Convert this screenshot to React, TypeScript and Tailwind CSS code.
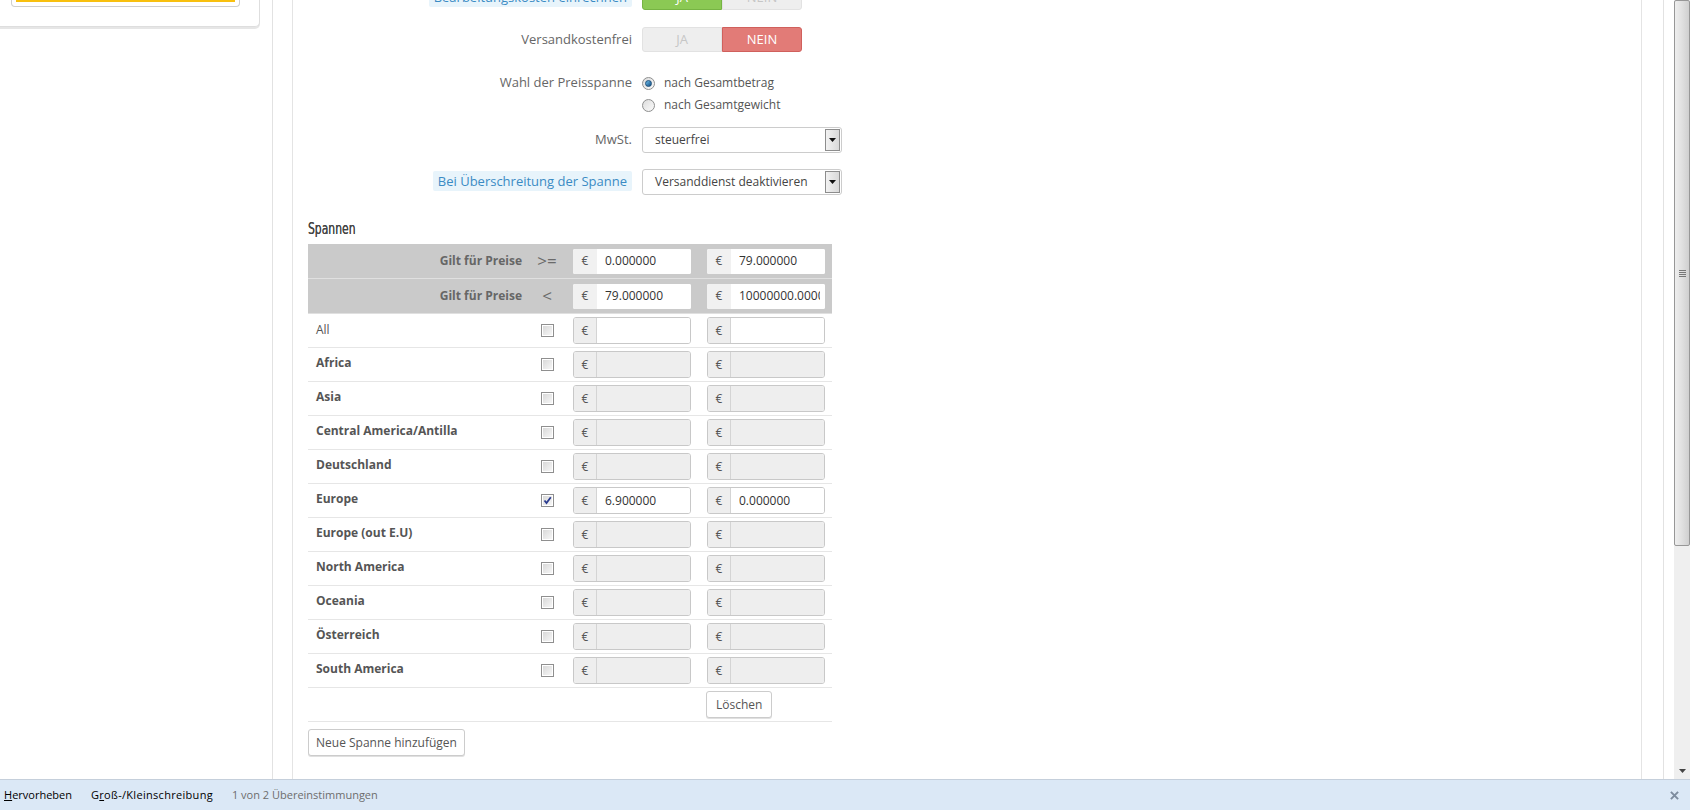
import React from 'react';

const regions = [
  { name: 'Africa' },
  { name: 'Asia' },
  { name: 'Central America/Antilla' },
  { name: 'Deutschland' },
  { name: 'Europe', checked: true, from: '6.900000', to: '0.000000' },
  { name: 'Europe (out E.U)' },
  { name: 'North America' },
  { name: 'Oceania' },
  { name: 'Österreich' },
  { name: 'South America' },
];

function Toggle({ yes }: { yes: boolean }) {
  return (
    <div className="flex h-[25px] w-[160px] text-[13px] uppercase">
      <div
        className={
          yes
            ? 'flex w-[80px] items-center justify-center rounded-l-[3px] border border-[#76b443] bg-[#8bc954] text-white'
            : 'flex w-[80px] items-center justify-center rounded-l-[3px] border border-[#e2e2e2] bg-[#eeeeee] text-[#c6c6c6]'
        }
      >
        JA
      </div>
      <div
        className={
          yes
            ? 'flex w-[80px] items-center justify-center rounded-r-[3px] border border-[#e2e2e2] bg-[#eeeeee] text-[#c6c6c6]'
            : 'flex w-[80px] items-center justify-center rounded-r-[3px] border border-[#d0605c] bg-[#e27b77] text-white'
        }
      >
        NEIN
      </div>
    </div>
  );
}

function Radio({ checked }: { checked?: boolean }) {
  return (
    <span className="flex h-[13px] w-[13px] items-center justify-center rounded-full border border-[#8e8f8f] bg-gradient-to-br from-[#dcdcdc] to-[#fbfbfb]">
      {checked && (
        <span className="h-[7px] w-[7px] rounded-full border border-[#1b4e7a] bg-gradient-to-br from-[#6fc1f0] to-[#124d80]" />
      )}
    </span>
  );
}

function Checkbox({ checked }: { checked?: boolean }) {
  return (
    <span className="flex h-[13px] w-[13px] items-center justify-center border border-[#8f8f8f] bg-white p-[1px]">
      <span className="relative flex h-full w-full items-center justify-center bg-gradient-to-br from-[#d9d9d9] to-[#f6f6f6]">
        {checked && (
          <svg viewBox="0 0 9 9" className="absolute h-[9px] w-[9px]">
            <path d="M1.5 4.5 L3.5 7 L7.8 1.2" fill="none" stroke="#2a3b8f" strokeWidth="1.8" />
          </svg>
        )}
      </span>
    </span>
  );
}

function Select({ value }: { value: string }) {
  return (
    <div className="flex h-[26px] w-[200px] items-center rounded-[3px] border border-[#cccccc] bg-white pl-[12px] text-[12px] text-[#444]">
      <span className="flex-1">{value}</span>
      <span className="mr-[1px] flex h-[22px] w-[15px] items-center justify-center border border-[#8d8d8d] bg-gradient-to-r from-[#f2f2f2] to-[#d9d9d9]">
        <svg viewBox="0 0 7 4" className="h-[4px] w-[7px]">
          <path d="M0 0 H7 L3.5 4 Z" fill="#111" />
        </svg>
      </span>
    </div>
  );
}

function PriceInput({ value, head, disabled }: { value?: string; head?: boolean; disabled?: boolean }) {
  return (
    <div
      className={
        head
          ? 'flex h-[25px] w-[118px] overflow-hidden rounded-[2px] bg-white'
          : 'flex h-[27px] w-[118px] overflow-hidden rounded-[3px] border border-[#c8c8c8] bg-white'
      }
    >
      <span
        className={
          head
            ? 'flex w-[24px] items-center justify-center bg-[#f1f1f1] text-[12px] text-[#555]'
            : 'flex w-[23px] items-center justify-center border-r border-[#d4d4d4] bg-[#eeeeee] text-[12px] text-[#555]'
        }
      >
        €
      </span>
      <input
        readOnly
        value={value ?? ''}
        className={
          disabled
            ? 'min-w-0 flex-1 bg-[#eeeeee] px-[8px] text-[12px] text-[#333] outline-none'
            : 'min-w-0 flex-1 bg-white pl-[8px] pr-[5px] text-[12px] text-[#333] outline-none'
        }
      />
    </div>
  );
}

function Label({ children }: { children: React.ReactNode }) {
  return <div className="w-[349px] shrink-0 pr-[10px] text-right text-[13px] text-[#666]">{children}</div>;
}

function Hint({ children }: { children: React.ReactNode }) {
  return <span className="rounded-[2px] bg-[#e8f4fb] px-[5px] py-[1px] text-[#3a8bc4]">{children}</span>;
}

export default function App() {
  return (
    <div className="flex h-[810px] w-[1690px] flex-col overflow-hidden bg-white font-['Open_Sans',sans-serif]">
      <div className="flex h-[779px]">
        {/* sidebar */}
        <aside className="w-[272px] shrink-0">
          <div className="h-[27px] w-[260px] rounded-br-[5px] border-r border-b border-[#dedede] bg-white shadow-[0_2px_0_#e6e6e6]">
            <div className="ml-[11px] h-[7px] w-[229px] rounded-b-[4px] border-x border-b border-[#cfcfcf] px-[4px]">
              <div className="h-[2px] bg-[#f8c00f]" />
            </div>
          </div>
        </aside>
        <div className="w-[20px] shrink-0 border-l border-[#e2e2e2]" />

        {/* main panel */}
        <main className="w-[1350px] shrink-0 border-x border-[#e4e4e4] bg-white">
          <div className="mt-[-15px] flex h-[25px] items-center">
            <Label>
              <Hint>Bearbeitungskosten einrechnen</Hint>
            </Label>
            <Toggle yes />
          </div>

          <div className="mt-[17px] flex h-[25px] items-center">
            <Label>Versandkostenfrei</Label>
            <Toggle yes={false} />
          </div>

          <div className="mt-[20px] flex items-start">
            <Label>
              <span className="leading-[20px]">Wahl der Preisspanne</span>
            </Label>
            <div className="text-[12px] text-[#555]">
              <div className="flex h-[22px] items-center gap-[9px]">
                <Radio checked />
                nach Gesamtbetrag
              </div>
              <div className="flex h-[22px] items-center gap-[9px]">
                <Radio />
                nach Gesamtgewicht
              </div>
            </div>
          </div>

          <div className="mt-[11px] flex h-[26px] items-center">
            <Label>MwSt.</Label>
            <Select value="steuerfrei" />
          </div>

          <div className="mt-[16px] flex h-[26px] items-center">
            <Label>
              <Hint>Bei Überschreitung der Spanne</Hint>
            </Label>
            <Select value="Versanddienst deaktivieren" />
          </div>

          <div className="mt-[23px] h-[20px] pl-[15px] leading-[20px]">
            <span className="inline-block origin-left scale-x-[0.8] font-['Liberation_Sans_Narrow','DejaVu_Sans_Condensed','Open_Sans',sans-serif] text-[15px] text-[#444] [text-shadow:0_0_0.4px_#444]">
              Spannen
            </span>
          </div>

          <div className="ml-[15px] mt-[6px] w-[524px]">
            {[
              { sign: '>=', from: '0.000000', to: '79.000000' },
              { sign: '<', from: '79.000000', to: '10000000.000000' },
            ].map((h, i) => (
              <div
                key={i}
                className="grid h-[35px] grid-cols-[223px_32px_134px_135px] items-center border-b border-[#e0e0e0] bg-[#cacaca]"
              >
                <div className="pr-[9px] text-right text-[12px] font-bold text-[#666]">Gilt für Preise</div>
                <div className="text-center text-[17px] text-[#6a6a6a]">{h.sign}</div>
                <div className="pl-[10px]">
                  <PriceInput head value={h.from} />
                </div>
                <div className="pl-[10px]">
                  <PriceInput head value={h.to} />
                </div>
              </div>
            ))}

            <div className="grid h-[34px] grid-cols-[223px_32px_134px_135px] items-center border-b border-[#e6e6e6]">
              <div className="pb-[2px] pl-[8px] text-[12px] text-[#555]">All</div>
              <div className="flex justify-center">
                <Checkbox />
              </div>
              <div className="pl-[10px]">
                <PriceInput />
              </div>
              <div className="pl-[10px]">
                <PriceInput />
              </div>
            </div>

            {regions.map((r) => (
              <div
                key={r.name}
                className="grid h-[34px] grid-cols-[223px_32px_134px_135px] items-center border-b border-[#e6e6e6]"
              >
                <div className="pb-[4px] pl-[8px] text-[12px] font-bold text-[#555]">{r.name}</div>
                <div className="flex justify-center">
                  <Checkbox checked={r.checked} />
                </div>
                <div className="pl-[10px]">
                  <PriceInput value={r.from} disabled={!r.checked} />
                </div>
                <div className="pl-[10px]">
                  <PriceInput value={r.to} disabled={!r.checked} />
                </div>
              </div>
            ))}

            <div className="grid h-[34px] grid-cols-[223px_32px_134px_135px] items-center border-b border-[#e6e6e6]">
              <div />
              <div />
              <div />
              <div className="pl-[9px]">
                <button className="h-[27px] rounded-[3px] border border-[#cccccc] bg-white px-[9px] text-[12px] text-[#555] shadow-[0_1px_0_#e0e0e0]">
                  Löschen
                </button>
              </div>
            </div>
          </div>

          <button className="ml-[15px] mt-[7px] h-[27px] rounded-[3px] border border-[#cccccc] bg-white px-[7px] text-[12px] text-[#555] shadow-[0_1px_0_#e0e0e0]">
            Neue Spanne hinzufügen
          </button>
        </main>

        <div className="w-[21px] shrink-0" />
        <div className="w-[11px] shrink-0 border-l border-[#e2e2e2]" />

        {/* scrollbar */}
        <div className="flex w-[16px] shrink-0 flex-col bg-[#efefef]">
          <div className="flex h-[546px] items-center justify-center rounded-[2px] border border-[#979797] bg-gradient-to-r from-[#eeeeee] via-[#e0e0e0] to-[#cfcfcf]">
            <div className="flex flex-col gap-[1px]">
              <span className="h-[1px] w-[7px] bg-[#777]" />
              <span className="h-[1px] w-[7px] bg-[#777]" />
              <span className="h-[1px] w-[7px] bg-[#777]" />
              <span className="h-[1px] w-[7px] bg-[#777]" />
            </div>
          </div>
          <div className="flex-1" />
          <div className="flex h-[17px] items-center justify-center">
            <svg viewBox="0 0 7 4" className="h-[4px] w-[7px]">
              <path d="M0 0 H7 L3.5 4 Z" fill="#444" />
            </svg>
          </div>
        </div>
      </div>

      {/* find bar */}
      <div className="flex h-[31px] items-center border-t border-[#c5cfdb] bg-[#dbe8f6] pl-[4px] text-[11px] text-black">
        <span>
          <span className="underline">H</span>ervorheben
        </span>
        <span className="ml-[19px] tracking-[0.3px]">
          G<span className="underline">r</span>oß-/Kleinschreibung
        </span>
        <span className="ml-[19px] text-[#6d6d6d]">1 von 2 Übereinstimmungen</span>
        <span className="flex-1" />
        <svg viewBox="0 0 10 10" className="mr-[11px] h-[9px] w-[9px]">
          <path d="M1 1 L9 9 M9 1 L1 9" stroke="#7d8c9e" strokeWidth="2.2" />
        </svg>
      </div>
    </div>
  );
}
